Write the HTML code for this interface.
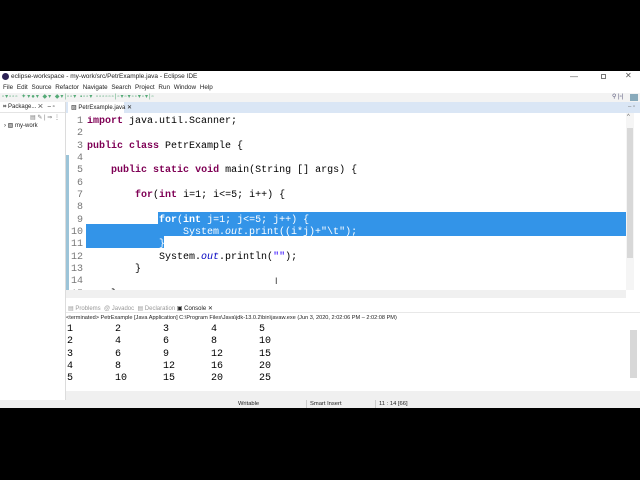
<!DOCTYPE html>
<html><head><meta charset="utf-8"><style>
*{margin:0;padding:0;box-sizing:border-box}
body{width:640px;height:480px;background:#000;position:relative;overflow:hidden;font-family:"Liberation Sans",sans-serif}
.a{position:absolute}
.ui{font-size:6px;color:#222;white-space:nowrap}
.code{font-family:"Liberation Mono",monospace;font-size:10px;white-space:pre;color:#000}
.ln{font-family:"Liberation Mono",monospace;font-size:10px;color:#787878;text-align:right;width:14px}
.kw{color:#7f0055;font-weight:bold}
.sel{background:#3394e8;color:#fff}
.st{color:#2a00ff}
.fi{color:#0000c0;font-style:italic}
</style></head><body>
<div class="a" style="left:0;top:71px;width:640px;height:337px;background:#fff"></div>
<div class="a" style="left:2px;top:73px;width:7px;height:7px;border-radius:50%;background:#2c2255"></div>
<div class="a ui" style="left:11px;top:73px;font-size:6.5px">eclipse-workspace - my-work/src/PetrExample.java - Eclipse IDE</div>
<div class="a ui" style="left:570px;top:72px;font-size:8px;color:#555">—</div>
<div class="a" style="left:601px;top:74px;width:5px;height:5px;border:1px solid #777"></div>
<div class="a ui" style="left:625px;top:71px;font-size:8px;color:#555">✕</div>
<div class="a ui" style="left:3px;top:84px;font-size:6.3px;word-spacing:2px">File Edit Source Refactor Navigate Search Project Run Window Help</div>
<div class="a" style="left:0;top:93px;width:640px;height:9px;background:#f3f3f3"></div>
<div class="a ui" style="left:2px;top:93px;font-size:6px;color:#5a7;letter-spacing:1px">▫▾▫▫▫ ✦▾●▾ ◆▾ ◆▾|▫▫▾ ▪▫▫▾ ▫▫▫▫▫▫|▫▾▫▾▫▫▾▫▾|▫</div>
<div class="a ui" style="left:612px;top:93px;font-size:6px;color:#557">⚲ |▫|</div>
<div class="a" style="left:630px;top:94px;width:8px;height:7px;background:#8ab"></div>
<div class="a" style="left:0;top:102px;width:65px;height:11px;background:#fff;border-bottom:1px solid #e4e4e4"></div>
<div class="a ui" style="left:3px;top:104px">⌗ Package... ✕ &nbsp; ‒ ▫</div>
<div class="a ui" style="left:30px;top:114px;color:#777">▤ ✎ | ⇒ ⋮</div>
<div class="a ui" style="left:4px;top:122px">› ▧ my-work</div>
<div class="a" style="left:65px;top:102px;width:1px;height:306px;background:#dcdcdc"></div>
<div class="a" style="left:66px;top:102px;width:574px;height:11px;background:#dae6f5"></div>
<div class="a" style="left:68px;top:102px;width:56px;height:11px;background:#fff"></div>
<div class="a ui" style="left:71px;top:104px">▨ PetrExample.java ✕</div>
<div class="a ui" style="left:628px;top:104px;color:#777">‒ ▫</div>
<div class="a" style="left:66px;top:155px;width:3px;height:136px;background:#9cc4d8"></div>
<div class="a" style="left:626px;top:113px;width:8px;height:177px;background:#f5f5f5"></div>
<div class="a" style="left:627px;top:128px;width:6px;height:130px;background:#d8d8d8"></div>
<div class="a ui" style="left:627px;top:114px;color:#666">^</div>
<div class="a sel" style="left:158px;top:212px;width:468px;height:12px"></div>
<div class="a sel" style="left:86px;top:224px;width:540px;height:12px"></div>
<div class="a sel" style="left:86px;top:236px;width:78px;height:12px"></div>
<div class="a" style="left:69px;top:116px;height:174px;overflow:hidden">
<div class="ln" style="line-height:12.35px">1<br>2<br>3<br>4<br>5<br>6<br>7<br>8<br>9<br>10<br>11<br>12<br>13<br>14<br>15</div>
</div>
<div class="a code" style="left:87px;top:116px;line-height:12.35px;height:174px;overflow:hidden"><span class="kw">import</span> java.util.Scanner;

<span class="kw">public</span> <span class="kw">class</span> PetrExample {

    <span class="kw">public</span> <span class="kw">static</span> <span class="kw">void</span> main(String [] args) {

        <span class="kw">for</span>(<span class="kw">int</span> i=1; i&lt;=5; i++) {

            <span style="color:#fff;font-weight:bold">for</span><span style="color:#fff">(</span><span style="color:#fff;font-weight:bold">int</span><span style="color:#fff"> j=1; j&lt;=5; j++) {</span>
<span style="color:#fff">                System.<i>out</i>.print((i*j)+"\t");</span>
<span style="color:#fff">            }</span>
            System.<span class="fi">out</span>.println(<span class="st">""</span>);
        }

    }</div>
<div class="a" style="left:66px;top:290px;width:560px;height:8px;background:#f0f0f0"></div>
<div class="a ui" style="left:275px;top:276px;font-size:9px;color:#333">I</div>
<div class="a" style="left:66px;top:298px;width:574px;height:4px;background:#fff"></div>
<div class="a" style="left:66px;top:302px;width:574px;height:11px;background:#fff;border-bottom:1px solid #e8e8e8"></div>
<div class="a ui" style="left:68px;top:305px;color:#999">▤ Problems &nbsp;@ Javadoc &nbsp;▤ Declaration <span style="color:#222">▣ Console ✕</span></div>
<div class="a ui" style="left:66px;top:315px;font-size:5.6px">&lt;terminated&gt; PetrExample [Java Application] C:\Program Files\Java\jdk-13.0.2\bin\javaw.exe (Jun 3, 2020, 2:02:06 PM – 2:02:08 PM)</div>
<div class="a code" style="left:67px;top:324px;line-height:12.3px;tab-size:8">1	2	3	4	5
2	4	6	8	10
3	6	9	12	15
4	8	12	16	20
5	10	15	20	25</div>
<div class="a" style="left:630px;top:330px;width:7px;height:48px;background:#d8d8d8"></div>
<div class="a" style="left:66px;top:391px;width:574px;height:9px;background:#f0f0f0"></div>
<div class="a" style="left:0;top:400px;width:640px;height:8px;background:#f0f0f0"></div>
<div class="a ui" style="left:238px;top:401px;font-size:5.8px">Writable</div>
<div class="a ui" style="left:310px;top:401px;font-size:5.8px">Smart Insert</div>
<div class="a ui" style="left:379px;top:401px;font-size:5.8px">11 : 14 [66]</div>
<div class="a" style="left:306px;top:400px;width:1px;height:8px;background:#ccc"></div>
<div class="a" style="left:375px;top:400px;width:1px;height:8px;background:#ccc"></div>
</body></html>
